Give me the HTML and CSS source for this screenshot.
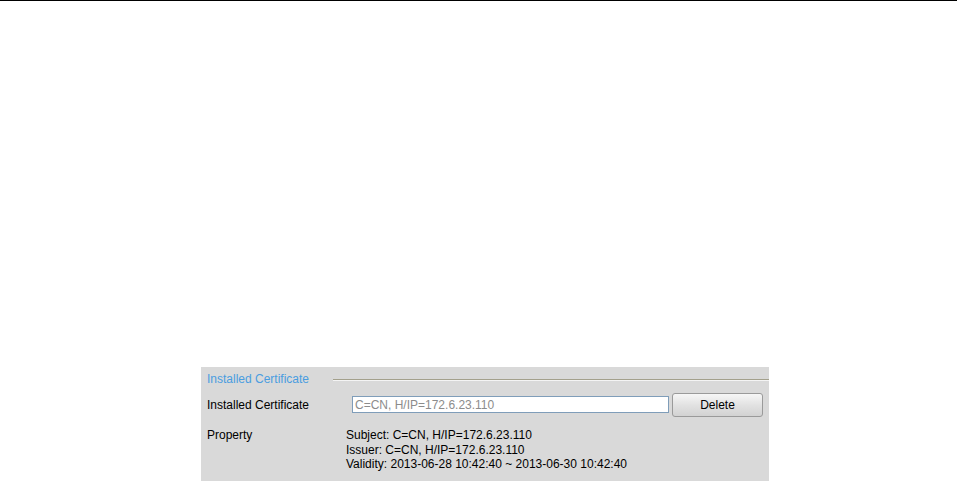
FILE: index.html
```html
<!DOCTYPE html>
<html>
<head>
<meta charset="utf-8">
<link rel="stylesheet" href="styles.css">
</head>
<body>
<div class="topline"></div>
<section class="panel">
  <div class="legend">
    <span class="legend-title">Installed Certificate</span>
    <span class="legend-rule"></span>
  </div>
  <div class="row cert-row">
    <span class="label">Installed Certificate</span>
    <input class="field" type="text" value="C=CN, H/IP=172.6.23.110" readonly>
    <button class="btn">Delete</button>
  </div>
  <div class="row prop-row">
    <span class="label">Property</span>
    <div class="props">
      <div>Subject: C=CN, H/IP=172.6.23.110</div>
      <div>Issuer: C=CN, H/IP=172.6.23.110</div>
      <div>Validity: 2013-06-28 10:42:40 ~ 2013-06-30 10:42:40</div>
    </div>
  </div>
</section>
</body>
</html>
```
FILE: styles.css
```css
html, body {
  margin: 0;
  padding: 0;
  background: #ffffff;
  font-family: "Liberation Sans", Arial, sans-serif;
  font-size: 12px;
  color: #000;
  overflow: hidden;
}
.topline {
  width: 957px;
  height: 1px;
  background: #000;
}
.panel {
  margin: 366px 0 0 201px;
  width: 568px;
  height: 114px;
  background: #d9d9d9;
  box-sizing: border-box;
  padding: 5px 0 0 6px;
}
.legend {
  display: flex;
  align-items: center;
  height: 14px;
}
.legend-title {
  color: #4a9de0;
  width: 126px;
  white-space: nowrap;
}
.legend-rule {
  flex: 1;
  height: 1px;
  border-top: 1px solid #a3a08c;
  background: #f4f4f4;
  margin-top: 1px;
}
.row {
  display: flex;
}
.cert-row {
  align-items: center;
  margin-top: 7px;
  height: 23px;
}
.label {
  width: 145px;
  white-space: nowrap;
}
.field {
  width: 317px;
  height: 17px;
  box-sizing: border-box;
  border: 1px solid #7f9db9;
  background: #fff;
  color: #8c8c8c;
  font-family: "Liberation Sans", Arial, sans-serif;
  font-size: 12px;
  padding: 0 2px;
  margin: 0;
  outline: none;
}
.btn {
  margin-left: 3px;
  width: 91px;
  height: 24px;
  border: 1px solid #9a9a9a;
  border-radius: 3px;
  background: linear-gradient(#f6f6f6, #e2e2e2 50%, #d2d2d2);
  font-family: "Liberation Sans", Arial, sans-serif;
  font-size: 12px;
  color: #000;
  padding: 0;
}
.prop-row {
  margin-top: 12px;
}
.prop-row .label {
  width: 139px;
}
.props {
  line-height: 14.5px;
}
.props div {
  white-space: nowrap;
}
```
